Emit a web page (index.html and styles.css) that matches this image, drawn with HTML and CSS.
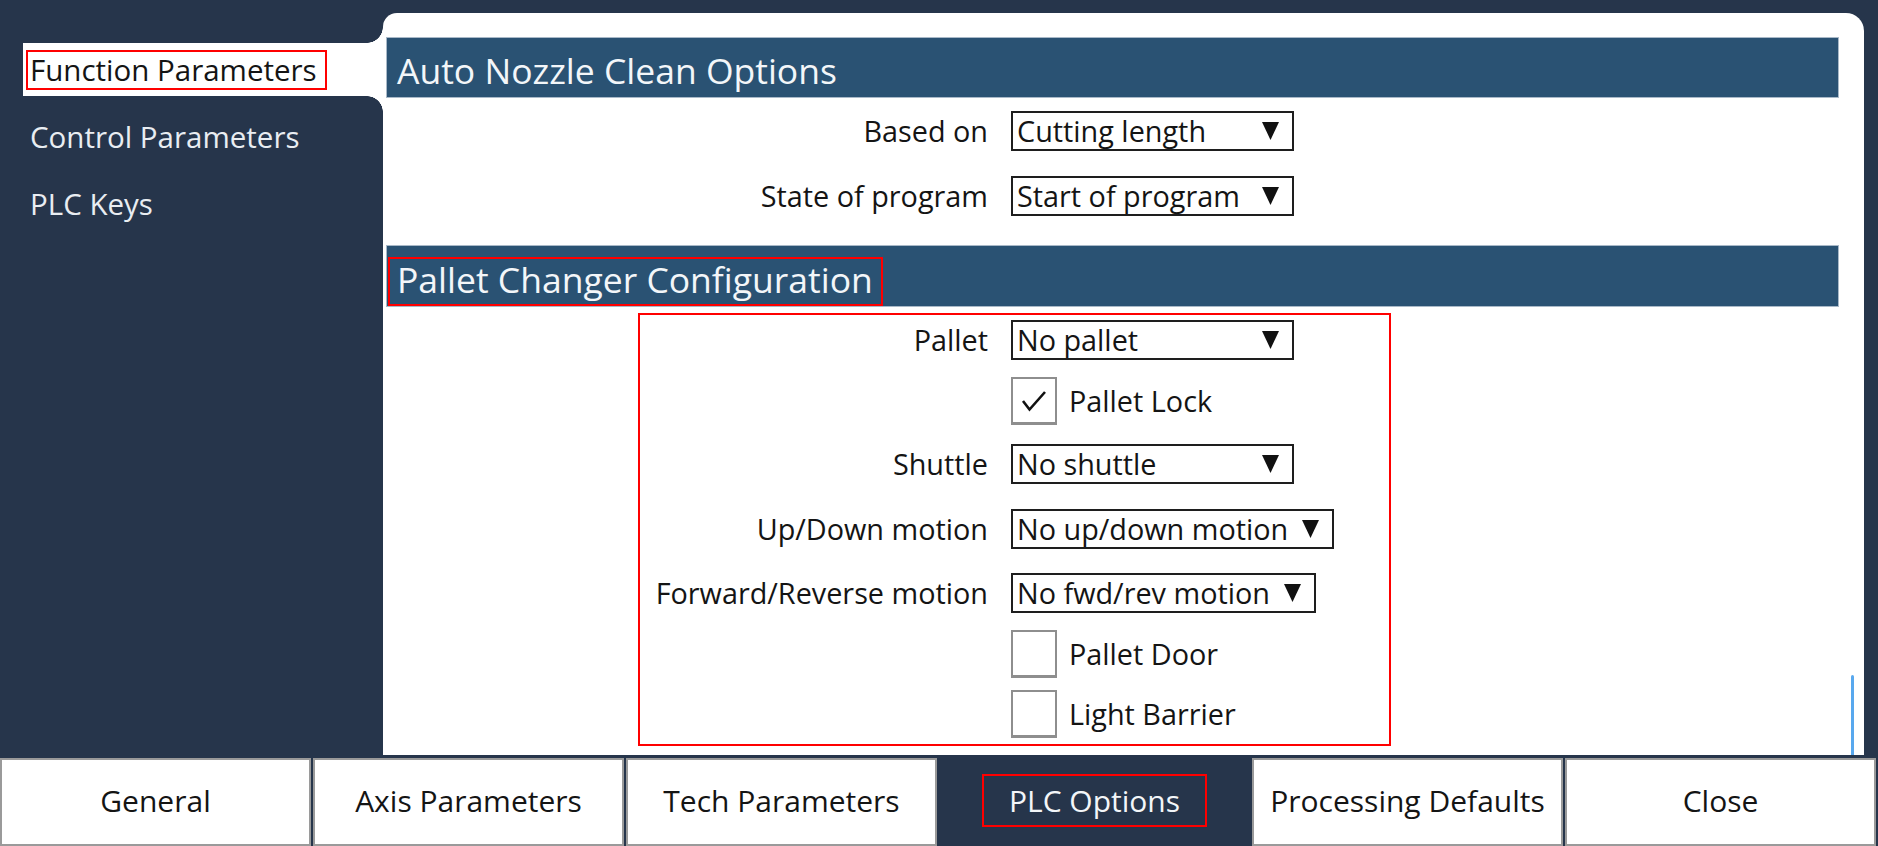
FILE: index.html
```html
<!DOCTYPE html>
<html>
<head>
<meta charset="utf-8">
<link rel="stylesheet" href="styles.css">
</head>
<body>
<div class="app">
  <div class="main">
    <nav class="sidebar">
      <div class="side-item active"><span class="side-label boxed">Function Parameters</span></div>
      <div class="side-item"><span class="side-label">Control Parameters</span></div>
      <div class="side-item"><span class="side-label">PLC Keys</span></div>
    </nav>
    <section class="panel">
      <h2 class="section-head"><span class="head-text">Auto Nozzle Clean Options</span></h2>
      <div class="form nozzle">
        <div class="row">
          <span class="lbl">Based on</span>
          <div class="select"><span>Cutting length</span><svg class="arrow" width="17" height="18" viewBox="0 0 17 18"><polygon points="0,0 17,0 8.5,18" fill="#111"/></svg></div>
        </div>
        <div class="row">
          <span class="lbl">State of program</span>
          <div class="select"><span>Start of program</span><svg class="arrow" width="17" height="18" viewBox="0 0 17 18"><polygon points="0,0 17,0 8.5,18" fill="#111"/></svg></div>
        </div>
      </div>
      <h2 class="section-head second"><span class="head-text boxed">Pallet Changer Configuration</span></h2>
      <div class="form pallet">
        <div class="row">
          <span class="lbl">Pallet</span>
          <div class="select"><span>No pallet</span><svg class="arrow" width="17" height="18" viewBox="0 0 17 18"><polygon points="0,0 17,0 8.5,18" fill="#111"/></svg></div>
        </div>
        <div class="row mt17">
          <span class="lbl"></span>
          <div class="check-wrap">
            <div class="check"><svg width="26" height="22" viewBox="0 0 26 22"><polyline points="2,11 8.5,19.5 24,2" fill="none" stroke="#111" stroke-width="2.6" stroke-linejoin="miter"/></svg></div>
            <span>Pallet Lock</span>
          </div>
        </div>
        <div class="row mt19">
          <span class="lbl">Shuttle</span>
          <div class="select"><span>No shuttle</span><svg class="arrow" width="17" height="18" viewBox="0 0 17 18"><polygon points="0,0 17,0 8.5,18" fill="#111"/></svg></div>
        </div>
        <div class="row mt25">
          <span class="lbl">Up/Down motion</span>
          <div class="select"><span>No up/down motion</span><svg class="arrow" width="17" height="18" viewBox="0 0 17 18"><polygon points="0,0 17,0 8.5,18" fill="#111"/></svg></div>
        </div>
        <div class="row mt24">
          <span class="lbl">Forward/Reverse motion</span>
          <div class="select"><span>No fwd/rev motion</span><svg class="arrow" width="17" height="18" viewBox="0 0 17 18"><polygon points="0,0 17,0 8.5,18" fill="#111"/></svg></div>
        </div>
        <div class="row mt17">
          <span class="lbl"></span>
          <div class="check-wrap">
            <div class="check"></div>
            <span>Pallet Door</span>
          </div>
        </div>
        <div class="row mt12">
          <span class="lbl"></span>
          <div class="check-wrap">
            <div class="check"></div>
            <span>Light Barrier</span>
          </div>
        </div>
      </div>
      <div class="scrollbar"></div>
    </section>
    <div class="gutter"></div>
  </div>
  <footer class="bottom-tabs">
    <div class="tab">General</div>
    <div class="tab">Axis Parameters</div>
    <div class="tab">Tech Parameters</div>
    <div class="tab active"><span class="tab-label">PLC Options</span></div>
    <div class="tab">Processing Defaults</div>
    <div class="tab">Close</div>
  </footer>
</div>
</body>
</html>
```
FILE: styles.css
```css
* {
  box-sizing: border-box;
  margin: 0;
  padding: 0;
}

html,
body {
  width: 1878px;
  height: 846px;
  overflow: hidden;
}

body {
  background: #26354b;
  font-family: "Open Sans", "Liberation Sans", sans-serif;
  color: #141414;
}

.app {
  display: flex;
  flex-direction: column;
  height: 846px;
}

.main {
  display: flex;
  height: 755px;
}

/* Sidebar */
.sidebar {
  width: 383px;
  flex: none;
  padding: 43px 0 0 23px;
  display: flex;
  flex-direction: column;
  gap: 14px;
}

.side-item {
  position: relative;
  height: 53px;
  display: flex;
  align-items: center;
  padding-left: 3px;
  color: #e9edf2;
  font-size: 29.5px;
}

.side-item.active {
  background: #fff;
  color: #141414;
}

.side-item.active::before,
.side-item.active::after {
  content: "";
  position: absolute;
  right: 0;
  width: 16px;
  height: 16px;
}

.side-item.active::before {
  top: -16px;
  background: radial-gradient(circle at 0 0, transparent 15.5px, #fff 16px);
}

.side-item.active::after {
  bottom: -16px;
  background: radial-gradient(circle at 0 100%, transparent 15.5px, #fff 16px);
}

.side-label {
  border: 2px solid transparent;
  padding: 0 8px 0 2px;
  line-height: 36px;
}

.side-label.boxed {
  border-color: #f00;
}

/* Panel */
.panel {
  position: relative;
  flex: none;
  width: 1481px;
  margin-top: 13px;
  background: #fff;
  border-radius: 14px 18px 0 0;
  padding: 24px 25px 0 3px;
}

.gutter {
  flex: 1;
}

.section-head {
  height: 61px;
  background: #2a5273;
  border: 1px solid #a9b9c8;
  display: flex;
  align-items: flex-end;
  font-weight: 400;
  font-size: 35.5px;
  color: #f3f6f9;
}

.section-head.second {
  margin-top: 29px;
  height: 62px;
}

.head-text {
  margin-left: 1px;
  border: 2px solid transparent;
  padding: 0 8px 5px 7px;
  line-height: 40px;
}

.head-text.boxed {
  border-color: #f00;
}

.form {
  display: flex;
  flex-direction: column;
}

.row {
  display: flex;
  align-items: center;
  gap: 23px;
  font-size: 28.8px;
  line-height: 36px;
}

.lbl {
  width: 602px;
  flex: none;
  text-align: right;
}

.nozzle {
  padding-top: 13px;
  gap: 25px;
}

.pallet {
  margin: 6px 0 0 252px;
  width: 753px;
  border: 2px solid #f00;
  padding: 5px 0 6px;
}

.pallet .lbl {
  width: 348px;
}

.mt12 { margin-top: 12px; }
.mt17 { margin-top: 17px; }
.mt19 { margin-top: 19px; }
.mt24 { margin-top: 24px; }
.mt25 { margin-top: 25px; }

.select {
  height: 40px;
  min-width: 283px;
  border: 2px solid #1e1e1e;
  display: flex;
  align-items: center;
  justify-content: space-between;
  gap: 14px;
  padding: 0 13px 0 4px;
  white-space: nowrap;
}

.arrow {
  flex: none;
}

.check-wrap {
  display: flex;
  align-items: center;
  gap: 12px;
}

.check {
  width: 46px;
  height: 48px;
  border: 2px solid #8e8e8e;
  border-bottom-width: 3px;
  display: flex;
  align-items: center;
  justify-content: center;
  background: #fff;
}

.scrollbar {
  position: absolute;
  right: 10px;
  top: 662px;
  bottom: 0;
  width: 3px;
  border-radius: 2px 2px 0 0;
  background: #58a8ee;
}

/* Bottom tabs */
.bottom-tabs {
  display: flex;
  gap: 2px;
  margin-top: 3px;
  height: 88px;
  padding-right: 2px;
}

.tab {
  flex: 1;
  background: #fff;
  border: 2px solid #9a9a9a;
  display: flex;
  align-items: center;
  justify-content: center;
  font-size: 30px;
  color: #141414;
  padding-bottom: 3px;
}

.tab.active {
  background: #26354b;
  border-color: #26354b;
  color: #f3f6f9;
}

.tab-label {
  border: 2px solid #f00;
  height: 53px;
  padding: 0 25px;
  display: flex;
  align-items: center;
}
```
